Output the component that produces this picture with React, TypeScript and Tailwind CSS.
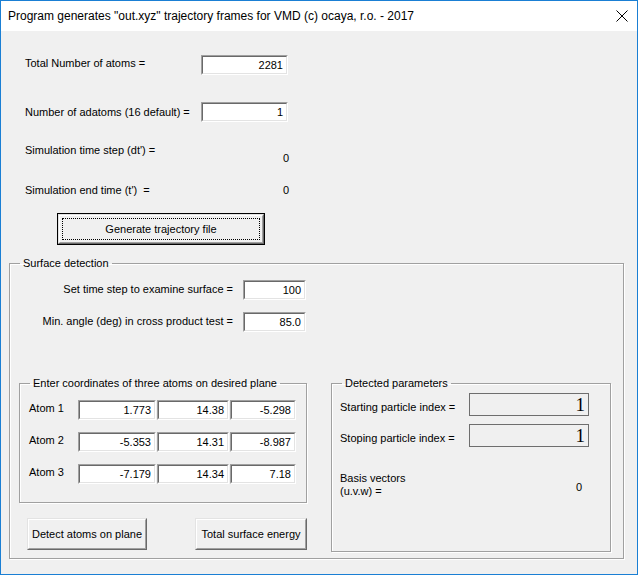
const ui = { fontFamily: '"Liberation Sans", Arial, sans-serif' };

function Sunken({ value, className }: { value: string; className: string }) {
  return (
    <div className={`border-t border-l border-t-[#a0a0a0] border-l-[#a0a0a0] border-b border-r border-b-white border-r-white ${className}`}>
      <div className="h-full border-t border-l border-t-[#696969] border-l-[#696969] border-b border-r border-b-[#e3e3e3] border-r-[#e3e3e3] bg-white flex items-center justify-end pr-[3px] text-[11px] text-black">
        {value}
      </div>
    </div>
  );
}

function Raised({ children, className }: { children: React.ReactNode; className: string }) {
  return (
    <div className={`border border-t-[#e3e3e3] border-l-[#e3e3e3] border-b-[#696969] border-r-[#696969] ${className}`}>
      <div className="h-full border border-t-white border-l-white border-b-[#a0a0a0] border-r-[#a0a0a0] bg-[#f0f0f0] flex items-center justify-center text-[11px]">
        {children}
      </div>
    </div>
  );
}

function Group({ title, className, children }: { title: string; className: string; children: React.ReactNode }) {
  return (
    <fieldset className={`border border-[#a0a0a0] shadow-[inset_1px_1px_0_#fff,1px_1px_0_#fff] ${className}`}>
      <legend className="ml-[10px] px-[3px] text-[11px] leading-[14px]">{title}</legend>
      {children}
    </fieldset>
  );
}

function IndexBox({ label }: { label: string }) {
  return (
    <div className="flex items-center">
      <span className="w-[129px] pt-[5px]">{label}</span>
      <div className="w-[120px] h-[23px] border border-[#6e6e6e] flex items-center justify-end pr-[3px] text-[19px] leading-none" style={{ fontFamily: '"Liberation Serif", "Times New Roman", serif' }}>
        1
      </div>
    </div>
  );
}

const atoms = [
  ['Atom 1', '1.773', '14.38', '-5.298'],
  ['Atom 2', '-5.353', '14.31', '-8.987'],
  ['Atom 3', '-7.179', '14.34', '7.18'],
];

export default function App() {
  return (
    <div className="w-[638px] h-[575px] border border-[#1a7fd4] flex flex-col text-black" style={ui}>
      <div className="h-[30px] bg-white flex items-center pl-[7px] pr-[9px] shrink-0">
        <span className="text-[12px]">Program generates "out.xyz" trajectory frames for VMD (c) ocaya, r.o. - 2017</span>
        <svg className="ml-auto" width="12" height="12" viewBox="0 0 12 12">
          <path d="M0.5 0.5 L11.5 11.5 M11.5 0.5 L0.5 11.5" stroke="#000" strokeWidth="1" />
        </svg>
      </div>

      <div className="flex-1 bg-[#f0f0f0] text-[11px] flex flex-col">
        <div className="pl-[24px] pt-[24px] flex flex-col">
          <div className="flex items-start">
            <span className="w-[176px]">Total Number of atoms =</span>
            <Sunken value="2281" className="w-[87px] h-[20px]" />
          </div>
          <div className="flex items-start mt-[27px]">
            <span className="w-[176px] pt-[2px]">Number of adatoms (16 default) =</span>
            <Sunken value="1" className="w-[87px] h-[20px]" />
          </div>
          <div className="flex items-start w-[264px] mt-[20px]">
            <span>Simulation time step (dt') =</span>
            <span className="ml-auto mt-[8px]">0</span>
          </div>
          <div className="flex items-start w-[264px] mt-[15px]">
            <span>Simulation end time (t')&nbsp; =</span>
            <span className="ml-auto">0</span>
          </div>
          <div className="ml-[32px] mt-[15px] w-[208px] h-[32px] border border-black">
            <Raised className="h-full w-full">
              <div className="w-[198px] h-[22px] border border-dotted border-black flex items-center justify-center">
                Generate trajectory file
              </div>
            </Raised>
          </div>
        </div>

        <Group title="Surface detection" className="ml-[8px] mt-[11px] w-[615px] h-[303px]">
          <div className="flex flex-col">
            <div className="flex items-start mt-[10px]">
              <span className="w-[223px] text-right pt-[1px]">Set time step to examine surface =</span>
              <Sunken value="100" className="ml-[10px] w-[63px] h-[20px]" />
            </div>
            <div className="flex items-start mt-[12px]">
              <span className="w-[223px] text-right pt-[1px]">Min. angle (deg) in cross product test =</span>
              <Sunken value="85.0" className="ml-[10px] w-[63px] h-[20px]" />
            </div>

            <div className="flex items-start mt-[44px]">
              <div className="flex flex-col ml-[9px]">
                <Group title="Enter coordinates of three atoms on desired plane" className="w-[288px] h-[127px]">
                  <div className="flex flex-col gap-[12px] mt-[10px] pl-[9px]">
                    {atoms.map(([name, x, y, z]) => (
                      <div key={name} className="flex items-start">
                        <span className="w-[49px]">{name}</span>
                        <Sunken value={x} className="w-[78px] h-[20px]" />
                        <Sunken value={y} className="ml-[1px] w-[72px] h-[20px]" />
                        <Sunken value={z} className="ml-[1px] w-[66px] h-[20px]" />
                      </div>
                    ))}
                  </div>
                </Group>
                <div className="flex mt-[15px] ml-[8px]">
                  <Raised className="w-[120px] h-[32px]">Detect atoms on plane</Raised>
                  <Raised className="ml-[48px] w-[112px] h-[32px]">Total surface energy</Raised>
                </div>
              </div>

              <Group title="Detected parameters" className="ml-[24px] w-[280px] h-[176px]">
                <div className="flex flex-col pl-[8px] mt-[3px] gap-[8px]">
                  <IndexBox label="Starting particle index =" />
                  <IndexBox label="Stoping particle index =" />
                  <div className="flex items-center mt-[17px] w-[242px]">
                    <span className="leading-[13px]">Basis vectors<br />(u.v.w) =</span>
                    <span className="ml-auto mt-[4px]">0</span>
                  </div>
                </div>
              </Group>
            </div>
          </div>
        </Group>
      </div>
    </div>
  );
}
